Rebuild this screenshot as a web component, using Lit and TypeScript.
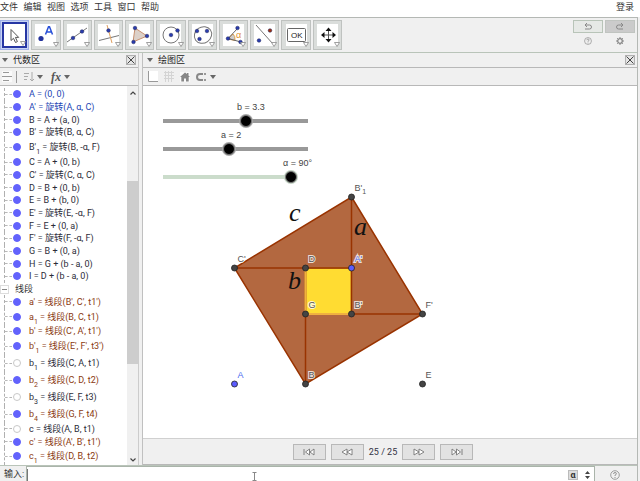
import { LitElement, html, svg, css, nothing } from "lit";
import { customElement, state } from "lit/decorators.js";
import { classMap } from "lit/directives/class-map.js";

type Tone = "blue" | "dark" | "brown";
interface Item { name: string; sub?: string; def: string; tone: Tone; on?: boolean; }

const points: Item[] = [
  { name: "A", def: "(0, 0)", tone: "blue" },
  { name: "A'", def: "旋转(A, α, C)", tone: "blue" },
  { name: "B", def: "A + (a, 0)", tone: "dark" },
  { name: "B'", def: "旋转(B, α, C)", tone: "dark" },
  { name: "B'", sub: "1", def: "旋转(B, -α, F)", tone: "dark" },
  { name: "C", def: "A + (0, b)", tone: "dark" },
  { name: "C'", def: "旋转(C, α, C)", tone: "dark" },
  { name: "D", def: "B + (0, b)", tone: "dark" },
  { name: "E", def: "B + (b, 0)", tone: "dark" },
  { name: "E'", def: "旋转(E, -α, F)", tone: "dark" },
  { name: "F", def: "E + (0, a)", tone: "dark" },
  { name: "F'", def: "旋转(F, -α, F)", tone: "dark" },
  { name: "G", def: "B + (0, a)", tone: "dark" },
  { name: "H", def: "G + (b - a, 0)", tone: "dark" },
  { name: "I", def: "D + (b - a, 0)", tone: "dark" },
];

const segments: Item[] = [
  { name: "a'", def: "线段(B', C', t1')", tone: "brown" },
  { name: "a", sub: "1", def: "线段(B, C, t1)", tone: "brown" },
  { name: "b'", def: "线段(C', A', t1')", tone: "brown" },
  { name: "b'", sub: "1", def: "线段(E', F', t3')", tone: "brown" },
  { name: "b", sub: "1", def: "线段(C, A, t1)", tone: "dark", on: false },
  { name: "b", sub: "2", def: "线段(C, D, t2)", tone: "brown" },
  { name: "b", sub: "3", def: "线段(E, F, t3)", tone: "dark", on: false },
  { name: "b", sub: "4", def: "线段(G, F, t4)", tone: "brown" },
  { name: "c", def: "线段(A, B, t1)", tone: "dark", on: false },
  { name: "c'", def: "线段(A', B', t1')", tone: "brown" },
  { name: "c", sub: "1", def: "线段(D, B, t2)", tone: "brown" },
];

const dot = (x: number, y: number, fill = "#2a3cae") =>
  svg`<circle cx=${x} cy=${y} r="1.8" fill=${fill} stroke="#1a2258" stroke-width=".5"/>`;

const tools = [
  { label: "移动", art: svg`<path d="M6 4.500V15.500l2.500-2.200 2 4.200 1.900-.9-2-4.200h3.300z" fill="#fff" stroke="#555" stroke-width="1"/>` },
  { label: "描点", art: svg`<circle cx="5" cy="13.500" r="2.600" fill="#24339c"/><path d="M9.500 9.500 12.500 1.800h1l3 7.700M10.800 7h4.500" fill="none" stroke="#2850d8" stroke-width="1.500"/>` },
  { label: "直线", art: svg`<path d="M-1 17 19 3" stroke="#777"/>${dot(5, 13)}${dot(14, 6.5)}` },
  { label: "垂线", art: svg`<path d="M0 15.500 20 10.500" stroke="#777"/><path d="M8 0 13 18" stroke="#e0a060"/>${dot(9.5, 5.5)}` },
  { label: "多边形", art: svg`<path d="M5 3 17 11 3 17z" fill="#dcd0c8" stroke="#c89070"/>${dot(5, 3)}${dot(17, 11)}${dot(3.5, 17)}` },
  { label: "圆", art: svg`<circle cx="10" cy="10" r="8" fill="none" stroke="#777"/>${dot(10, 10)}${dot(16.5, 5.5)}` },
  { label: "椭圆", art: svg`<ellipse cx="10" cy="10" rx="9" ry="8" transform="rotate(-35 10 10)" fill="none" stroke="#777"/>${dot(4, 6)}${dot(14, 6)}${dot(6.5, 14)}` },
  { label: "角度", art: svg`<path d="M4 14 9 9q2.500 2 2 6.500z" fill="#ccc" stroke="#e0a050"/><path d="M14 3 4 13.500 17 17" fill="none" stroke="#666"/>${dot(13.5, 3)}${dot(4, 13.5)}${dot(16.5, 17)}<text x="12" y="13" class="alpha">α</text>` },
  { label: "对称", art: svg`<path d="M1 0 18 19" stroke="#777"/>${dot(15, 5.5, "#a03010")}${dot(4, 15.5)}` },
  { label: "按钮", art: svg`<rect x=".5" y="3.500" width="18" height="13" rx="1" fill="#fff" stroke="#666"/><text x="4" y="13" class="ok">OK</text>` },
  { label: "移动视图", art: svg`<path d="M5 10h11M10.500 5v10" stroke="#555"/><path d="M10.500 2.500 13.500 6h-6zM10.500 17.500 13.500 14h-6zM3 10 6.500 7v6zM18 10 14.500 7v6z" fill="#111"/>` },
];

const vertices = [
  { x: 208.5, y: 111, t: "B'", sub: "1" },
  { x: 91.5, y: 182, t: "C'" },
  { x: 162.5, y: 182, t: "D" },
  { x: 208.5, y: 182, t: "A'", blue: true },
  { x: 162.5, y: 228, t: "G" },
  { x: 208.5, y: 228, t: "B'" },
  { x: 279.5, y: 228, t: "F'" },
  { x: 162.5, y: 298, t: "B" },
  { x: 279.5, y: 298, t: "E" },
  { x: 91.5, y: 298, t: "A", blue: true },
];

@customElement("app-root")
export class AppRoot extends LitElement {
  @state() private a = 2;
  @state() private b = 3.3;
  @state() private alpha = 90;

  static styles = css`
    :host { display: flex; flex-direction: column; height: 100vh; box-sizing: border-box; overflow: hidden;
      background: #f0f0f0; color: #333; font: 9px/12px Roboto, "Noto Sans CJK SC", sans-serif; padding-right: 2px; }
    * { box-sizing: border-box; }
    button { font: inherit; color: inherit; padding: 0; margin: 0; border: 0; background: none; display: flex; align-items: center; justify-content: center; }
    svg { display: block; }
    .menu { display: flex; justify-content: space-between; height: 17px; flex: none; background: #fff; margin-right: -2px; padding: 0 6px 3px 0; align-items: center; }
    .menu nav { display: flex; justify-content: space-between; width: 159px; }
    .frame { flex: 1; min-height: 0; display: flex; flex-direction: column; border: solid #b4b8b4; border-width: 1px 1px 0 0; }
    .toolbar { display: flex; justify-content: space-between; height: 35px; flex: none; padding: 2px 2px 2px 0; border-bottom: 1px solid #b9c4b9; }
    .tools { display: grid; grid-template-columns: repeat(11, 1fr); gap: 2px; width: 342px; height: 30px; }
    .tool { position: relative; background: #dadddb; border: 1px solid #bfc2c0; }
    .art { background: #fff; }
    .tool.sel { border: 1px solid #a0b0e8; background: #c8d4f4; }
    .tool.sel .art { outline: 2px solid #2636a4; }
    .tool .more { position: absolute; right: 1px; bottom: 2px; }
    .tool.sel .more { right: 2px; bottom: 3px; }
    .alpha { font: 9px "Liberation Sans", sans-serif; fill: #e09030; }
    .ok { font: 8px "Liberation Sans", sans-serif; fill: #222; }
    .side { display: grid; grid-template-columns: 30px 30px; grid-template-rows: 13px 15px; gap: 0 2px; }
    .hist { border: 1px solid #b8c4b8; background: #e6e9e6; }
    .redo { background: #cbcbcb; border-color: #c0c4c0; }
    .main { flex: 1; min-height: 0; display: flex; }
    .algebra { width: 139px; flex: none; display: flex; flex-direction: column; border-right: 1px solid #ccc; }
    .graphics { flex: 1; min-width: 0; display: flex; flex-direction: column; margin-left: 3px; border-left: 1px solid #c0c0c0; }
    .head { display: flex; align-items: center; gap: 5px; height: 15px; flex: none; padding: 0 2px; border-bottom: 1px solid #b8b8b8; }
    .graphics .head { padding: 0 2px 0 4px; }
    h2 { flex: 1; margin: 0; font: inherit; color: #222; }
    .close { width: 10px; height: 10px; border: 1px solid #b0b0b0; background: #e4e4e4; }
    .bar { display: flex; align-items: center; gap: 3px; height: 18px; flex: none; padding: 0 2px; border-bottom: 1px solid #b8b8b8; }
    .graphics .bar { padding: 0 5px; gap: 6px; }
    .bar .sep { width: 1px; height: 12px; background: #999; margin: 0 4px 0 1px; }
    .bar .fx { font: italic bold 12px/14px "Liberation Serif", serif; margin-left: 5px; color: #555; }
    .pair { display: flex; gap: 3px; }
    .list { flex: 1; min-height: 0; display: flex; background: #fff; }
    .tree { flex: 1; display: flex; flex-direction: column; margin: 0; padding: 2px 0 0; min-width: 0; white-space: nowrap; }
    .row { flex: 3 1 0; min-height: 0; display: flex; align-items: center; margin-left: 4px; border-left: 1px dashed #b0b0b0; }
    .row.tall { flex-grow: 4; }
    .row::before { content: ""; width: 7px; border-top: 1px dashed #b8b8b8; margin-right: 1px; flex: none; }
    .row label { display: flex; align-items: center; gap: 8px; line-height: 12px; }
    .row input { appearance: none; width: 8px; height: 8px; margin: 0; border-radius: 50%; border: 1px solid #c8c8c8; background: #fff; flex: none; }
    .row input:checked { background: #6262fc; border-color: #6262fc; }
    .row sub { font-size: 7px; line-height: 0; vertical-align: -4px; }
    .blue { color: #1c46b4; }
    .dark { color: #2c2c38; }
    .brown { color: #8a3a10; }
    .group { flex: 3 1 0; min-height: 0; display: flex; align-items: center; gap: 6px; }
    .group button { width: 9px; height: 9px; background: #fff; border: 1px solid #ddd; }
    .scroll { width: 11px; flex: none; display: flex; flex-direction: column; align-items: center; background: #f0f0f0; padding: 5px 0 3px; }
    .scroll .lane { flex: 1; width: 11px; display: flex; flex-direction: column; padding: 86px 0 94px; }
    .scroll .grip { flex: 1; background: #cdcdcd; }
    .canvas { position: relative; flex: 1; min-height: 0; background: #fff; overflow: hidden; }
    .drawing { width: 100%; height: 100%; }
    .lbl { font: 9px "Liberation Sans", sans-serif; fill: #555; stroke: #fff; stroke-width: 2px; stroke-opacity: .8; paint-order: stroke; }
    .lbl.b { fill: #4a6cf0; }
    .lbl .s { font-size: 7px; }
    .tex { font: italic 26px "Liberation Serif", serif; fill: #111; }
    .slider { position: absolute; display: flex; flex-direction: column; left: 20px; width: 145px; color: #444; font: 9px/12px "Liberation Sans", sans-serif; }
    .slider span { align-self: flex-start; }
    .slider input { appearance: none; width: 100%; height: 12px; margin: 2px 0 0; background: linear-gradient(#999, #999) center / 100% 4px no-repeat; }
    .slider input::-webkit-slider-thumb { appearance: none; width: 12px; height: 12px; border-radius: 50%; background: #000; border: 1px solid #777; box-shadow: 0 0 0 1px #aaa; }
    .sb { top: 15px; }
    .sb span { margin-left: 74px; }
    .sa { top: 43px; }
    .sa span { margin-left: 58px; }
    .sg { top: 71px; width: 134px; white-space: nowrap; }
    .sg span { margin-left: 120px; }
    .sg input { background-image: linear-gradient(#cbdccb, #cbdccb); }
    .sg input::-webkit-slider-thumb { box-shadow: 0 0 0 1px #c4d4c4; }
    .steps { display: flex; align-items: center; justify-content: center; gap: 5px; height: 27px; flex: none; padding-right: 14px; border-top: 1px solid #d0d0d0; border-bottom: 1px solid #b8b8b8; }
    .steps button { width: 33px; height: 16px; background: #e2e2e2; border: 1px solid #b8b8b8; }
    .steps output { color: #334; }
    .entry { display: flex; height: 16px; flex: none; align-items: stretch; border-top: 1px solid #b9c4b9; gap: 3px; padding-left: 4px; }
    .entry label { line-height: 17px; width: 19px; white-space: nowrap; }
    .field { position: relative; flex: 1; display: flex; align-items: center; gap: 7px; background: #fff; border: solid #aab4aa; border-width: 1px 1px 0 1px; padding: 2px 4px 0 0; }
    .field input { flex: 1; min-width: 0; height: 12px; border: 0; border-left: 1px solid #777; padding: 0 2px; font: inherit; background: none; outline: none; }
    .sym { width: 10px; height: 10px; background: #ddd; border: 1px solid #bbb; font-weight: bold; }
    .beam { position: absolute; left: 225px; top: 5px; }
    .help { width: 39px; padding: 2px 6px 0 0; }
  `;

  private tri = html`<svg width="6" height="4" viewBox="0 0 6 4"><path d="M0 0h6L3 4z" fill="#666"/></svg>`;

  private help = (n: number) => html`<svg width=${n} height=${n} viewBox="0 0 10 10" fill="none" stroke="#888"><circle cx="5" cy="5" r="4.300" stroke-width=".8"/><path d="M3.600 4q0-1.500 1.400-1.500T6.400 3.800Q6.400 4.600 5 5.200V6M5 7v1" stroke-width=".9"/></svg>`;

  private head(title: string) {
    return html`<div class="head">${this.tri}<h2>${title}</h2>
      <button class="close" aria-label="关闭"><svg width="8" height="8" viewBox="0 0 8 8"><path d="M.500.500l7 7M7.500.500l-7 7" stroke="#444"/></svg></button></div>`;
  }

  private row(i: Item) {
    return html`<div class=${classMap({ row: true, tall: !!i.sub })}>
      <label class=${i.tone}><input type="checkbox" .checked=${i.on !== false}><span>${i.name}${i.sub ? html`<sub>${i.sub}</sub>` : nothing} = ${i.def}</span></label></div>`;
  }

  private step(label: string, d: string) {
    return html`<button aria-label=${label}><svg width="12" height="8" viewBox="0 0 12 8"><path d=${d} fill="#fff" stroke="#777" stroke-width=".9"/></svg></button>`;
  }

  render() {
    return html`
      <header class="menu">
        <nav>${["文件", "编辑", "视图", "选项", "工具", "窗口", "帮助"].map((m) => html`<button>${m}</button>`)}</nav>
        <button>登录</button>
      </header>
      <div class="frame">
        <div class="toolbar">
          <div class="tools">${tools.map((t, n) => html`
            <button class=${classMap({ tool: true, sel: n === 0 })} aria-label=${t.label}>
              <svg class="art" width="21" height="22" viewBox="-1 -1 21 22" fill="none">${t.art}</svg>
              <svg class="more" width="6" height="5" viewBox="0 0 6 5"><path d="M.500.500h5L3 4.500z" fill="#fff" stroke="#888" stroke-width=".8"/></svg>
            </button>`)}</div>
          <div class="side">
            <button class="hist" aria-label="撤销"><svg width="8" height="7" viewBox="0 0 8 7" fill="none" stroke="#888"><path d="M3 0 1 2l2 2M1 2h4.500q2 0 2 2T5.500 6H1"/></svg></button>
            <button class="hist redo" aria-label="重做"><svg width="8" height="7" viewBox="0 0 8 7" fill="none" stroke="#888"><path d="M5 0l2 2-2 2M7 2H2.500q-2 0-2 2t2 2H7"/></svg></button>
            <button aria-label="帮助">${this.help(8)}</button>
            <button aria-label="设置"><svg width="8" height="8" viewBox="0 0 8 8" fill="none" stroke="#888"><circle cx="4" cy="4" r="2.300" stroke-width="1.300"/><path d="M4 0v1.500M4 6.500V8M0 4h1.500M6.500 4H8M1.200 1.200l1 1M5.800 5.800l1 1M6.800 1.200l-1 1M2.200 5.800l-1 1"/></svg></button>
          </div>
        </div>
        <div class="main">
          <section class="algebra">
            ${this.head("代数区")}
            <div class="bar">
              <button aria-label="辅助对象"><svg width="10" height="11" viewBox="0 0 10 11"><rect width="10" height="11" fill="#fafafa"/><path d="M1 1.500h6M0 5.500h10M1 9.500h6" stroke="#999"/></svg></button>
              <span class="sep"></span>
              <button class="pair" aria-label="排序"><svg width="10" height="10" viewBox="0 0 10 10" fill="none" stroke="#aaa"><path d="M0 1.500h5M0 4.500h4M0 7.500h3M8 0v9M6 7l2 2 2-2"/></svg>${this.tri}</button>
              <button class="pair"><span class="fx">fx</span>${this.tri}</button>
            </div>
            <div class="list">
              <div class="tree">
                ${points.map((p) => this.row(p))}
                <div class="group"><button aria-label="折叠"><svg width="5" height="1" viewBox="0 0 5 1"><path d="M0 .500h5" stroke="#888"/></svg></button>线段</div>
                ${segments.map((s) => this.row(s))}
              </div>
              <div class="scroll">
                <svg width="6" height="4" viewBox="0 0 6 4" fill="none"><path d="M.500 3.500 3 1l2.500 2.500" stroke="#444" stroke-width="1.200"/></svg>
                <div class="lane"><div class="grip"></div></div>
                <svg width="6" height="4" viewBox="0 0 6 4" fill="none"><path d="M.500.500 3 3l2.500-2.500" stroke="#444" stroke-width="1.200"/></svg>
              </div>
            </div>
          </section>
          <section class="graphics">
            ${this.head("绘图区")}
            <div class="bar">
              <button aria-label="坐标轴"><svg width="10" height="11" viewBox="0 0 10 11"><rect width="10" height="11" fill="#fff"/><path d="M.500 0v10.500H10" fill="none" stroke="#999"/></svg></button>
              <button aria-label="网格"><svg width="10" height="11" viewBox="0 0 10 11"><path d="M1.500 0v11M4.500 0v11M7.500 0v11M0 1.500h10M0 4.500h10M0 7.500h10" stroke="#d4d4d4"/></svg></button>
              <button aria-label="标准视图"><svg width="10" height="10" viewBox="0 0 10 10"><rect width="10" height="10" fill="#fafafa"/><path d="M0 5 5 .500 7 2V1h1.500v2.500L10 5H8.700v4.500H6V6.500H4v3H1.300V5z" fill="#888"/></svg></button>
              <button class="pair" aria-label="吸附"><svg width="11" height="10" viewBox="0 0 11 10" fill="none"><path d="M7 2H4a3 3 0 0 0 0 6h3" stroke="#888" stroke-width="2"/><path d="M8 2h2M8 8h2" stroke="#999" stroke-width="2"/></svg>${this.tri}</button>
            </div>
            <div class="canvas">
              <svg class="drawing">
                <path d="M208.500 111 279.500 228 162.500 298 91.500 182z" fill="#b36840" stroke="#993300" stroke-width="1.500"/>
                <rect x="162.500" y="182" width="46" height="46" fill="#ffdc32" stroke="#c08020" stroke-width="1.500"/>
                <path d="M91.500 182h117M208.500 111V228M162.500 228h117M162.500 182V298" fill="none" stroke="#993300" stroke-width="1.500"/>
                <path d="M162.500 228h46M162.500 228v-46" fill="none" stroke="#f0b040" stroke-width="2"/>
                ${vertices.map((v) => svg`<circle cx=${v.x} cy=${v.y} r="3" fill=${v.blue ? "#5c5cff" : "#444"} stroke="#222" stroke-width=".8"/>`)}
                ${vertices.map((v) => svg`<text class="lbl ${v.blue ? "b" : ""}" x=${v.x + 3} y=${v.y - 6}>${v.t}${v.sub ? svg`<tspan class="s" dy="3">${v.sub}</tspan>` : nothing}</text>`)}
                <text class="tex" x="146" y="135">c</text>
                <text class="tex" x="211" y="149">a</text>
                <text class="tex" x="145" y="203">b</text>
              </svg>
              <label class="slider sb"><span>b = ${this.b}</span><input type="range" min="-2.6" max="7.6" step="0.1" .value=${String(this.b)} @input=${(e: Event) => (this.b = +(e.target as HTMLInputElement).value)}></label>
              <label class="slider sa"><span>a = ${this.a}</span><input type="range" min="-2.6" max="7.6" step="0.1" .value=${String(this.a)} @input=${(e: Event) => (this.a = +(e.target as HTMLInputElement).value)}></label>
              <label class="slider sg"><span>α = ${this.alpha}°</span><input type="range" min="0" max="90" .value=${String(this.alpha)} @input=${(e: Event) => (this.alpha = +(e.target as HTMLInputElement).value)}></label>
            </div>
            <div class="steps">
              ${this.step("第一步", "M1 1v6M6.500 1v6L2.500 4zM11 1v6L7 4z")}
              ${this.step("上一步", "M6 1v6L1 4zM11 1v6L6 4z")}
              <output>25 / 25</output>
              ${this.step("下一步", "M1 1v6l5-3zM6 1v6l5-3z")}
              ${this.step("最后一步", "M1 1v6l4-3zM5.500 1v6l4-3zM11 1v6")}
            </div>
          </section>
        </div>
        <footer class="entry">
          <label for="cmd">输入:</label>
          <div class="field">
            <input id="cmd" type="text">
            <button class="sym">α</button>
            <svg width="5" height="8" viewBox="0 0 5 8"><path d="M2.500 0 5 3H0zM2.500 8 5 5H0z" fill="#444"/></svg>
            <svg class="beam" width="5" height="9" viewBox="0 0 5 9" fill="none"><path d="M.500.500h4M.500 8.500h4M2.500 0v9" stroke="#888"/></svg>
          </div>
          <button class="help" aria-label="帮助">${this.help(10)}</button>
        </footer>
      </div>`;
  }
}
